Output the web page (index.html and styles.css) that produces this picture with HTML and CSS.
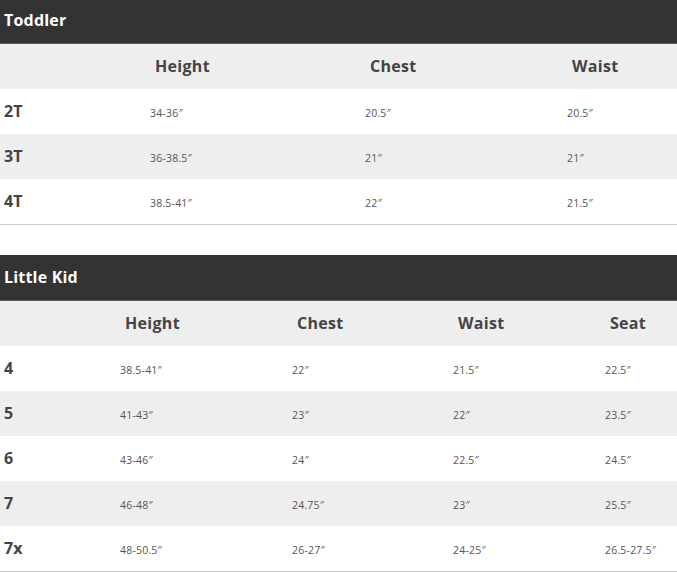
FILE: index.html
```html
<!DOCTYPE html>
<html>
<head>
<meta charset="utf-8">
<link rel="stylesheet" href="styles.css">
</head>
<body>
<div class="page">
  <section class="chart">
    <h2 class="chart-title">Toddler</h2>
    <table class="size-table toddler">
      <colgroup>
        <col class="c-size"><col class="c-height"><col class="c-chest"><col class="c-waist">
      </colgroup>
      <thead>
        <tr><th></th><th>Height</th><th>Chest</th><th>Waist</th></tr>
      </thead>
      <tbody>
        <tr><th>2T</th><td>34-36″</td><td>20.5″</td><td>20.5″</td></tr>
        <tr><th>3T</th><td>36-38.5″</td><td>21″</td><td>21″</td></tr>
        <tr><th>4T</th><td>38.5-41″</td><td>22″</td><td>21.5″</td></tr>
      </tbody>
    </table>
  </section>
  <section class="chart">
    <h2 class="chart-title">Little Kid</h2>
    <table class="size-table little">
      <colgroup>
        <col class="c-size"><col class="c-height"><col class="c-chest"><col class="c-waist"><col class="c-seat">
      </colgroup>
      <thead>
        <tr><th></th><th>Height</th><th>Chest</th><th>Waist</th><th>Seat</th></tr>
      </thead>
      <tbody>
        <tr><th>4</th><td>38.5-41″</td><td>22″</td><td>21.5″</td><td>22.5″</td></tr>
        <tr><th>5</th><td>41-43″</td><td>23″</td><td>22″</td><td>23.5″</td></tr>
        <tr><th>6</th><td>43-46″</td><td>24″</td><td>22.5″</td><td>24.5″</td></tr>
        <tr><th>7</th><td>46-48″</td><td>24.75″</td><td>23″</td><td>25.5″</td></tr>
        <tr><th>7x</th><td>48-50.5″</td><td>26-27″</td><td>24-25″</td><td>26.5-27.5″</td></tr>
      </tbody>
    </table>
  </section>
</div>
</body>
</html>
```

FILE: styles.css
```css
html, body {
  margin: 0;
  padding: 0;
  background: #fff;
}
body {
  font-family: "Open Sans", "Liberation Sans", sans-serif;
  color: #444;
  overflow: hidden;
}
.page {
  margin-top: -2px;
  display: flex;
  flex-direction: column;
  gap: 30px;
}
.chart-title {
  margin: 0;
  height: 46px;
  box-sizing: border-box;
  padding: 0 4px 1px;
  display: flex;
  align-items: center;
  background: #333;
  color: #fff;
  font-size: 16px;
  font-weight: 700;
  letter-spacing: 0.2px;
  border-bottom: 1px solid #5a5a5a;
}
.size-table {
  width: 100%;
  border-collapse: separate;
  border-spacing: 0;
  table-layout: fixed;
  border-bottom: 1px solid #ccc;
}
.size-table thead tr {
  height: 45px;
  background: #eee;
}
.size-table thead th {
  text-align: left;
  padding: 0 0 2px 5px;
  font-size: 16px;
  font-weight: 700;
  letter-spacing: 0.3px;
  color: #444;
}
.size-table tbody tr {
  height: 45px;
}
.size-table tbody tr:nth-child(even) {
  background: #eee;
}
.size-table tbody th {
  text-align: left;
  padding: 0 0 2px 4px;
  font-size: 16px;
  font-weight: 700;
  color: #444;
}
.size-table td {
  padding: 2px 0 0 0;
  font-size: 10.5px;
  letter-spacing: 0.2px;
  color: #555;
}
.toddler .c-size { width: 150px; }
.toddler .c-height { width: 215px; }
.toddler .c-chest { width: 202px; }
.toddler .c-waist { width: 110px; }
.little .c-size { width: 120px; }
.little .c-height { width: 172px; }
.little .c-chest { width: 161px; }
.little .c-waist { width: 152px; }
.little .c-seat { width: 72px; }
```
